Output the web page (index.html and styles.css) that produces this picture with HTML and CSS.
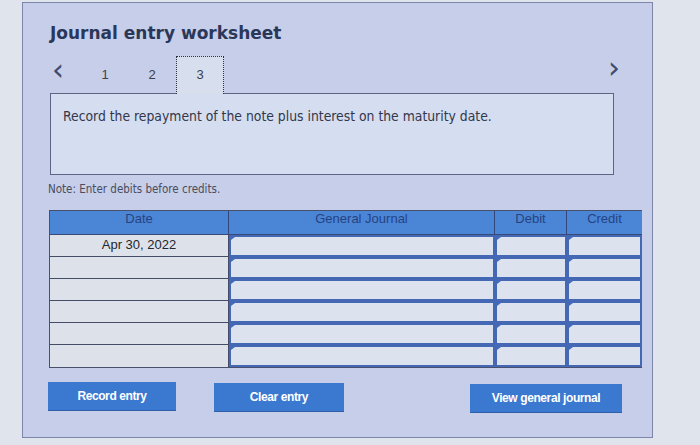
FILE: index.html
```html
<!doctype html>
<html lang="en">
<head>
    <meta charset="UTF-8">
    <title>Journal entry worksheet</title>
    <link rel="stylesheet" href="styles.css">
</head>
<body>
    <div class="panel">
        <h1 class="title">Journal entry worksheet</h1>

        <div class="tabs">
            <span class="arrow">&lsaquo;</span>
            <span class="tab">1</span>
            <span class="tab two">2</span>
            <span class="tab active">3</span>
            <span class="arrow next">&rsaquo;</span>
        </div>

        <div class="question">Record the repayment of the note plus interest on the maturity date.</div>

        <p class="note">Note: Enter debits before credits.</p>

        <div class="grid">
            <div class="th">Date</div>
            <div class="th">General Journal</div>
            <div class="th">Debit</div>
            <div class="th">Credit</div>

            <div class="date">Apr 30, 2022</div><div class="cell"></div><div class="cell"></div><div class="cell"></div>
            <div class="date"></div><div class="cell"></div><div class="cell"></div><div class="cell"></div>
            <div class="date"></div><div class="cell"></div><div class="cell"></div><div class="cell"></div>
            <div class="date"></div><div class="cell"></div><div class="cell"></div><div class="cell"></div>
            <div class="date"></div><div class="cell"></div><div class="cell"></div><div class="cell"></div>
            <div class="date last"></div><div class="cell"></div><div class="cell"></div><div class="cell"></div>
        </div>

        <div class="buttons">
            <button class="btn">Record entry</button>
            <button class="btn clear">Clear entry</button>
            <button class="btn view">View general journal</button>
        </div>
    </div>
</body>
</html>
```

FILE: styles.css
```css
*{padding:0;margin:0;box-sizing:border-box;}

body{
    background:#dfe4ed;
    width:700px;
    height:445px;
    overflow:hidden;
}
.panel{
    margin:2px 0 0 22px;
    width:631px;
    height:436px;
    background:#c6cee9;
    border:1px solid #7d86a8;
    padding:19px 0 0 27px;
}
.title{
    font:bold 17px "DejaVu Sans",sans-serif;
    color:#2b3758;
    height:22px;
    line-height:22px;
}

.tabs{
    display:flex;
    align-items:center;
    width:564px;
    height:37px;
    margin-top:12px;
}
.arrow{
    font:30px "DejaVu Sans",sans-serif;
    color:#3f4a6c;
    line-height:20px;
    margin:0 0 10px 2px;
    width:30px;
}
.arrow.next{
    margin-left:auto;
    width:auto;
    margin-right:-6px;
    margin-bottom:14px;
}
.tab{
    font:13px "Liberation Sans",Arial,sans-serif;
    color:#3a3f4c;
    width:46px;
    text-align:center;
    line-height:37px;
}
.tab.two{width:48px;}
.tab.active{
    width:48px;
    background:#d7dfee;
    border:1px dotted #2c3040;
    border-bottom:none;
    line-height:35px;
    height:38px;
    margin-top:1px;
}

.question{
    width:564px;
    height:82px;
    border:1px solid #5d6484;
    background:#d5ddf0;
    padding:14px 12px;
    font:13.8px "DejaVu Sans Condensed","DejaVu Sans",sans-serif;
    color:#33374a;
}
.note{
    font:11.5px "DejaVu Sans Condensed","DejaVu Sans",sans-serif;
    color:#4a4d5c;
    margin:7px 0 0 -2px;
    height:16px;
}

.grid{
    display:grid;
    grid-template-columns:179px 266px 72px 75px;
    grid-template-rows:24px;
    grid-auto-rows:22px;
    margin:12px 0 0 -1px;
    width:593px;
    border:1px solid #48506c;
    background:#dde2ea;
}
.th{
    line-height:22px;
    background:#4b85d6;
    border-right:1px solid #33477a;
    border-bottom:1px solid #394a78;
    text-align:center;
    font:13px "Liberation Sans",Arial,sans-serif;
    color:#264381;
}
.th:nth-child(4){border-right:none;}
.date{
    border-bottom:1px solid #454c66;
    border-right:1px solid #454c66;
    text-align:center;
    font:13px/20px "Liberation Sans",Arial,sans-serif;
    color:#23262e;
}
.date.last{border-bottom:none;}
.cell{
    position:relative;
    border:2px solid #4468b4;
    background:#dde3ee;
}
.cell:before{
    content:'';
    position:absolute;
    left:0;
    top:0;
    border-top:3px solid #3c6cc4;
    border-right:4px solid transparent;
}

.buttons{
    display:flex;
    align-items:flex-start;
    margin:14px 0 0 -2px;
}
.btn{
    height:29px;
    width:128px;
    background:#3b78d0;
    border:none;
    border-bottom:1px solid #2e5fa8;
    color:#fff;
    font:bold 12px "Liberation Sans",Arial,sans-serif;
    letter-spacing:-0.4px;
}
.btn.clear{
    width:130px;
    margin:1px 0 0 38px;
}
.btn.view{
    width:152px;
    margin:2px 0 0 126px;
}
```
